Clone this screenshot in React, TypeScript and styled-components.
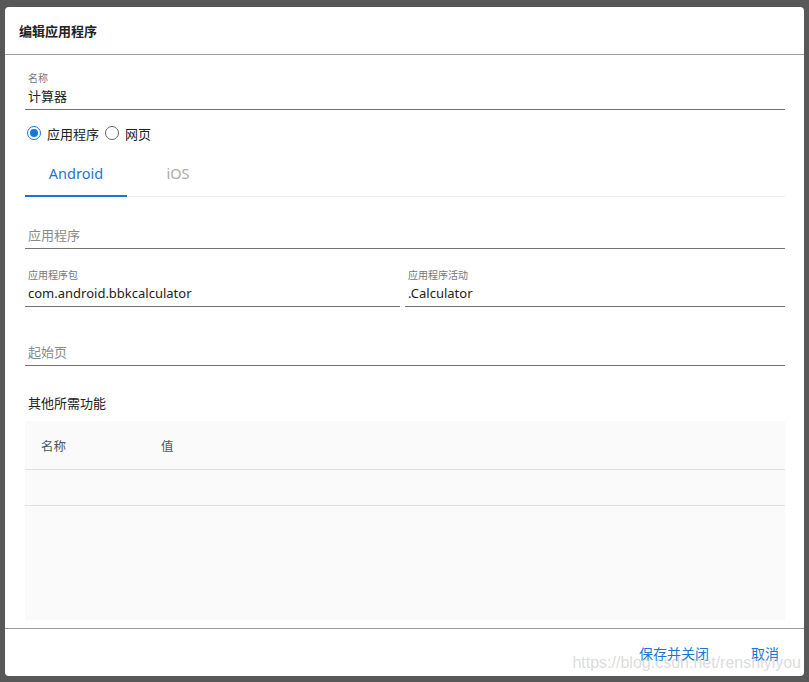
import React, { useState } from "react";
import styled, { createGlobalStyle } from "styled-components";

const GlobalStyle = createGlobalStyle`
  html, body {
    margin: 0;
    padding: 0;
    background: #585858;
    font-family: "Noto Sans", "Noto Sans CJK SC", sans-serif;
  }
`;

const BLUE = "#1976d2";

const Page = styled.div`
  width: 809px;
  height: 682px;
  padding: 7px 5px 6px 5px;
  box-sizing: border-box;
`;

const Dialog = styled.div`
  position: relative;
  width: 799px;
  height: 669px;
  background: #fff;
  border-radius: 4px;
  display: flex;
  flex-direction: column;
  overflow: hidden;
`;

const Header = styled.div`
  height: 47px;
  flex-shrink: 0;
  padding-left: 14px;
  display: flex;
  align-items: center;
  border-bottom: 1px solid #9e9e9e;
  font-size: 13px;
  font-weight: bold;
  color: #222;
`;

const Body = styled.div`
  flex: 1;
  min-height: 0;
  padding: 17px 19px 8px 20px;
  display: flex;
  flex-direction: column;
`;

const Field = styled.div<{ $mt?: number }>`
  margin-top: ${(p) => p.$mt ?? 0}px;
  border-bottom: 1px solid #757575;
  padding-bottom: 3px;
`;

const Label = styled.div`
  font-size: 10px;
  line-height: 12px;
  color: #777;
  padding-left: 3px;
  margin-bottom: 2px;
`;

const Value = styled.div<{ $placeholder?: boolean }>`
  font-size: 13px;
  line-height: 20px;
  padding-left: 3px;
  color: ${(p) => (p.$placeholder ? "#8a8a8a" : "#222")};
`;

const FieldRow = styled.div<{ $mt: number }>`
  display: grid;
  grid-template-columns: 375px 1fr;
  gap: 5px;
  margin-top: ${(p) => p.$mt}px;
`;

const RadioRow = styled.div`
  margin-top: 13px;
  height: 20px;
  display: flex;
  align-items: center;
  padding-left: 2px;
  font-size: 13px;
  color: #222;
`;

const RadioItem = styled.label`
  display: flex;
  align-items: center;
  gap: 6px;
  margin-right: 6px;
  cursor: pointer;
`;

const RadioCircle = styled.span<{ $on: boolean }>`
  width: 14px;
  height: 14px;
  box-sizing: border-box;
  border-radius: 50%;
  border: 1.5px solid ${(p) => (p.$on ? BLUE : "#666")};
  display: flex;
  align-items: center;
  justify-content: center;
  &::after {
    content: "";
    width: 8px;
    height: 8px;
    border-radius: 50%;
    background: ${(p) => (p.$on ? BLUE : "transparent")};
  }
`;

const Tabs = styled.div`
  margin-top: 9px;
  display: flex;
  border-bottom: 1px solid #ececec;
`;

const Tab = styled.div<{ $active: boolean }>`
  width: 102px;
  height: 45px;
  box-sizing: border-box;
  display: flex;
  align-items: center;
  justify-content: center;
  font-size: 14.5px;
  padding-bottom: 2px;
  color: ${(p) => (p.$active ? BLUE : "#aaa")};
  border-bottom: 2px solid ${(p) => (p.$active ? BLUE : "transparent")};
  margin-bottom: -1px;
  cursor: pointer;
`;

const SectionTitle = styled.div`
  margin-top: 27px;
  font-size: 13px;
  line-height: 20px;
  color: #222;
  padding-left: 3px;
`;

const Table = styled.div`
  margin-top: 8px;
  flex: 1;
  background: #fafafa;
  display: flex;
  flex-direction: column;
`;

const HeadRow = styled.div`
  height: 48px;
  display: flex;
  align-items: center;
  border-bottom: 1px solid #e0e0e0;
  font-size: 12.5px;
  color: #555;
`;

const HeadCell = styled.div`
  width: 120px;
  padding-left: 16px;
  box-sizing: border-box;
`;

const EmptyRow = styled.div`
  height: 35px;
  border-bottom: 1px solid #e0e0e0;
`;

const Footer = styled.div`
  height: 48px;
  box-sizing: border-box;
  flex-shrink: 0;
  border-top: 1px solid #9e9e9e;
  display: flex;
  align-items: center;
  justify-content: flex-end;
  padding: 0 25px 0 0;
  gap: 42px;
`;

const TextButton = styled.button`
  border: none;
  background: none;
  padding: 0;
  font-family: inherit;
  font-size: 14px;
  color: ${BLUE};
  cursor: pointer;
`;

const Watermark = styled.div`
  position: absolute;
  right: 3px;
  bottom: 4px;
  font-family: "Liberation Sans", Arial, sans-serif;
  font-size: 16px;
  color: rgba(190, 190, 190, 0.55);
  pointer-events: none;
`;

export default function App() {
  const [kind, setKind] = useState<"app" | "web">("app");
  const [tab, setTab] = useState<"android" | "ios">("android");

  return (
    <>
      <GlobalStyle />
      <Page>
        <Dialog>
          <Header>编辑应用程序</Header>
          <Body>
            <Field>
              <Label>名称</Label>
              <Value>计算器</Value>
            </Field>

            <RadioRow>
              <RadioItem onClick={() => setKind("app")}>
                <RadioCircle $on={kind === "app"} />
                应用程序
              </RadioItem>
              <RadioItem onClick={() => setKind("web")}>
                <RadioCircle $on={kind === "web"} />
                网页
              </RadioItem>
            </RadioRow>

            <Tabs>
              <Tab $active={tab === "android"} onClick={() => setTab("android")}>
                Android
              </Tab>
              <Tab $active={tab === "ios"} onClick={() => setTab("ios")}>
                iOS
              </Tab>
            </Tabs>

            <Field $mt={28}>
              <Value $placeholder>应用程序</Value>
            </Field>

            <FieldRow $mt={20}>
              <Field>
                <Label>应用程序包</Label>
                <Value>com.android.bbkcalculator</Value>
              </Field>
              <Field>
                <Label>应用程序活动</Label>
                <Value>.Calculator</Value>
              </Field>
            </FieldRow>

            <Field $mt={35}>
              <Value $placeholder>起始页</Value>
            </Field>

            <SectionTitle>其他所需功能</SectionTitle>
            <Table>
              <HeadRow>
                <HeadCell>名称</HeadCell>
                <HeadCell>值</HeadCell>
              </HeadRow>
              <EmptyRow />
            </Table>
          </Body>
          <Footer>
            <TextButton>保存并关闭</TextButton>
            <TextButton>取消</TextButton>
          </Footer>
          <Watermark>https://blog.csdn.net/renshiyiyou</Watermark>
        </Dialog>
      </Page>
    </>
  );
}
